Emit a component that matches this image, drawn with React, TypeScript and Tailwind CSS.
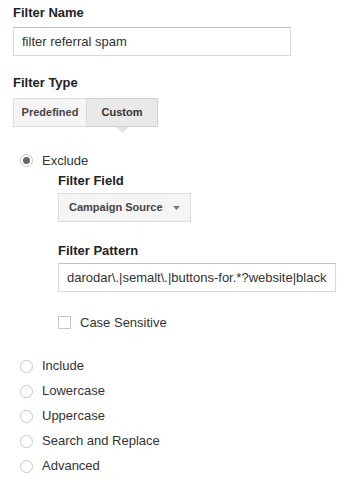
import React from "react";

const font = { fontFamily: '"Liberation Sans", Arial, sans-serif' };

function Radio({ checked }: { checked?: boolean }) {
  return (
    <span className="flex h-[13px] w-[13px] shrink-0 items-center justify-center rounded-full border border-[#c6c6c6] bg-white">
      {checked && <span className="h-[7px] w-[7px] rounded-full bg-[#666]" />}
    </span>
  );
}

function RadioRow({ label, checked }: { label: string; checked?: boolean }) {
  return (
    <div className="flex h-[25px] items-center gap-[9px] pl-[7px] text-[13px] text-[#333]">
      <Radio checked={checked} />
      <span>{label}</span>
    </div>
  );
}

export default function App() {
  return (
    <div className="min-h-[480px] bg-white px-[13px] pt-[5px]" style={font}>
      <div className="text-[13px] font-bold leading-[16px] text-[#222]">Filter Name</div>
      <div className="mt-[6px] flex h-[29px] w-[278px] items-center border border-[#d9d9d9] border-t-[#c0c0c0] px-[8px] text-[13px] text-[#333]">
        filter referral spam
      </div>

      <div className="mt-[19px] text-[13px] font-bold leading-[16px] text-[#222]">Filter Type</div>
      <div className="mt-[7px] flex">
        <div className="flex h-[29px] w-[74px] items-center justify-center border border-[#dcdcdc] bg-[#f5f5f5] text-[11px] font-bold text-[#444]">
          Predefined
        </div>
        <div className="relative flex h-[29px] w-[71px] items-center justify-center border border-l-0 border-[#d0d0d0] bg-[#e9e9e9] text-[11px] font-bold text-[#333]">
          Custom
          <svg className="absolute left-[29px] top-[28px]" width="13" height="7" viewBox="0 0 13 7">
            <path d="M0 0 L6.5 6 L13 0 Z" fill="#e3e3e3" />
          </svg>
        </div>
      </div>

      <div className="mt-[21px]">
        <RadioRow label="Exclude" checked />
      </div>

      <div className="pl-[45px]">
        <div className="text-[13px] font-bold leading-[16px] text-[#222]">Filter Field</div>
        <div className="mt-[4px] flex h-[29px] w-[133px] items-center justify-between border border-[#dcdcdc] bg-[#f5f5f5] pl-[10px] pr-[10px] text-[11px] font-bold text-[#444]">
          <span>Campaign Source</span>
          <svg width="7" height="4" viewBox="0 0 7 4">
            <path d="M0 0 L3.5 4 L7 0 Z" fill="#777" />
          </svg>
        </div>

        <div className="mt-[21px] text-[13px] font-bold leading-[16px] text-[#222]">Filter Pattern</div>
        <div className="mt-[4px] flex h-[29px] w-[278px] items-center overflow-hidden whitespace-nowrap border border-[#d9d9d9] border-t-[#c0c0c0] px-[8px] text-[13px] text-[#333]">
          darodar\.|semalt\.|buttons-for.*?website|black
        </div>

        <div className="mt-[21px] flex items-center gap-[9px] text-[13px] text-[#333]">
          <span className="h-[13px] w-[13px] border border-[#c6c6c6] bg-white" />
          <span>Case Sensitive</span>
        </div>
      </div>

      <div className="mt-[21px]">
        <RadioRow label="Include" />
        <RadioRow label="Lowercase" />
        <RadioRow label="Uppercase" />
        <RadioRow label="Search and Replace" />
        <RadioRow label="Advanced" />
      </div>
    </div>
  );
}
